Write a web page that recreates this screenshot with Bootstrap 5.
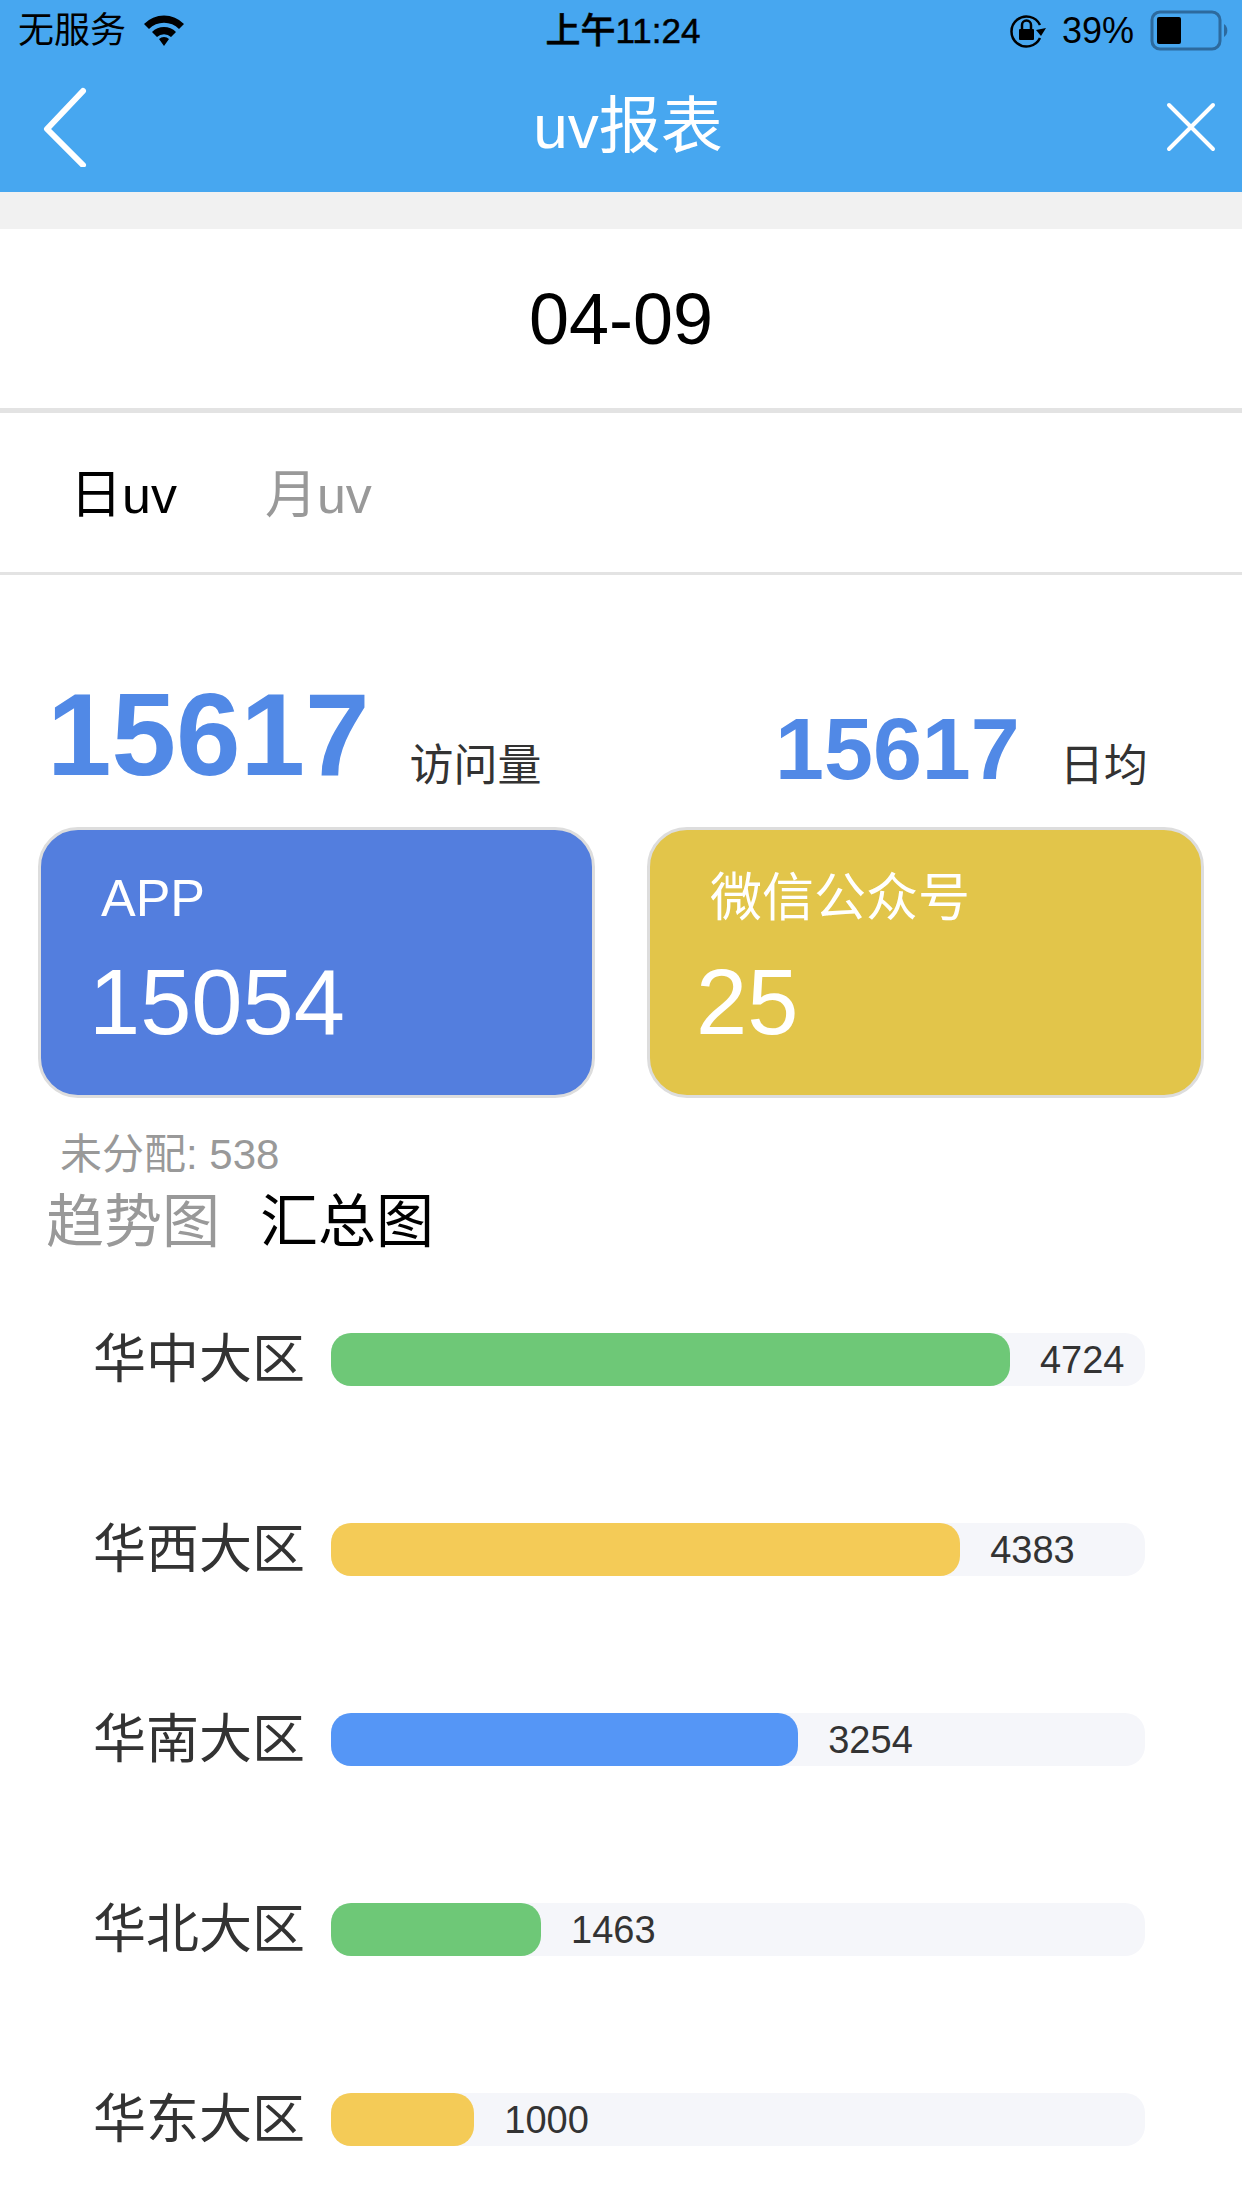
<!DOCTYPE html>
<html lang="zh">
<head>
  <meta charset="UTF-8">
  <meta name="viewport" content="width=device-width, initial-scale=1.0">
  <title>uv报表</title>
  <link href="https://cdn.jsdelivr.net/npm/bootstrap@5.3.3/dist/css/bootstrap.min.css" rel="stylesheet">
  <style>
    html, body { height: 2208px; overflow: hidden; }
    body { font-family: "Liberation Sans", "Noto Sans CJK SC", sans-serif; background: #fff; color: #000; }
    .app-top { background: #47a7f0; height: 192px; }
    .status-bar { height: 62px; padding: 0 14px 0 18px; font-size: 36px; line-height: 62px; }
    .status-left, .status-right { width: 400px; }
    .status-time { font-weight: 500; font-size: 35px; -webkit-text-stroke: .5px #000; }
    .title-bar { height: 130px; padding: 0 26px 0 42px; }
    .title-text { color: #fff; font-size: 62px; line-height: 1; }
    .gap-strip { height: 37px; background: #f1f1f1; }
    .date-row { height: 179px; font-size: 72px; border-bottom: 5px solid #e3e3e3; box-sizing: content-box; }
    .tab-row { height: 162px; padding-left: 70px; gap: 88px; font-size: 52px; border-bottom: 3px solid #e3e3e3; padding-top: 4px; }
    .tab-off { color: #999; }
    .total-row { height: 252px; padding: 0 0 34px 47px; }
    .total-left { width: 728px; }
    .num-big { color: #5189e6; font-weight: 700; font-size: 116px; line-height: 1; margin-right: 40px; }
    .num-mid { color: #5189e6; font-weight: 700; font-size: 88px; line-height: 1; margin-right: 40px; }
    .num-label { color: #333; font-size: 44px; line-height: 1.2; }
    .cards-row { padding: 0 38px; gap: 52px; }
    .stat-box { width: 558px; height: 271px; border: 3px solid #ddd; border-radius: 40px; color: #fff; padding: 38px 0 0 48px; }
    .box-blue { background: #537ede; }
    .box-yellow { background: #e2c54a; }
    .box-name { font-size: 52px; line-height: 60px; margin-left: 12px; }
    .box-num { font-size: 92px; line-height: 100px; margin-top: 24px; }
    .box-yellow .box-name { margin-left: 12px; }
    .box-yellow .box-num { margin-left: -2px; }
    .unassigned { color: #999; font-size: 42px; line-height: 50px; padding: 32px 0 0 60px; }
    .chart-tabs { padding-left: 46px; gap: 40px; font-size: 58px; line-height: 76px; margin-top: 4px; }
    .chart-rows { padding: 66px 97px 0 93px; }
    .chart-row { height: 190px; padding-top: 7px; }
    .region { width: 238px; font-size: 53px; line-height: 53px; color: #333; white-space: nowrap; }
    .track { height: 53px; border-radius: 20px; background: #f5f6fa; flex: 1; }
    .fill { height: 53px; border-radius: 20px; }
    .fill-green { background: #6ec877; }
    .fill-yellow { background: #f4cb57; }
    .fill-blue { background: #5596f6; }
    .fill-value { font-size: 38px; line-height: 48px; color: #333; margin-left: 30px; }
  </style>
</head>
<body>
  <div class="app-top">
    <div class="status-bar d-flex justify-content-between">
      <div class="status-left d-flex align-items-center gap-3">
        <span>无服务</span>
        <svg width="44" height="34" viewBox="0 0 44 34"><path d="M2 10 A28 28 0 0 1 42 10 L37 15 A21 21 0 0 0 7 15 Z M10 18 A17 17 0 0 1 34 18 L29 23 A10 10 0 0 0 15 23 Z M17 25 A7 7 0 0 1 27 25 L22 32 Z" fill="#000"/></svg>
      </div>
      <div class="status-time">上午11:24</div>
      <div class="status-right d-flex align-items-center justify-content-end gap-3">
        <svg width="36" height="36" viewBox="0 0 36 36" fill="none"><path d="M30 12 A15 15 0 1 0 30 25" stroke="#000" stroke-width="2.5"/><path d="M26 17 L36 15 L31 23 Z" fill="#000"/><rect x="9" y="16" width="15" height="11" rx="1" fill="#000"/><path d="M12 16 V12 a4.500 4.500 0 0 1 9 0 V16" stroke="#000" stroke-width="2.500"/></svg>
        <span>39%</span>
        <svg width="78" height="42" viewBox="0 0 78 42" class="ms-n1"><rect x="2" y="2" width="68" height="37" rx="8" fill="none" stroke="#2d6a9e" stroke-width="3"/><rect x="7" y="7" width="24" height="27" rx="2" fill="#000"/><path d="M74 14 a8 8 0 0 1 0 13 Z" fill="#2d6a9e"/></svg>
      </div>
    </div>
    <div class="title-bar d-flex align-items-center justify-content-between">
      <svg width="48" height="80" viewBox="0 0 48 80" fill="none"><path d="M41 4 L5 42 L41 78" stroke="#fff" stroke-width="6" stroke-linecap="round" stroke-linejoin="round"/></svg>
      <div class="title-text">uv报表</div>
      <svg width="50" height="50" viewBox="0 0 50 50" fill="none"><path d="M3 3 L47 47 M47 3 L3 47" stroke="#fff" stroke-width="4" stroke-linecap="round"/></svg>
    </div>
  </div>
  <div class="gap-strip"></div>
  <div class="date-row d-flex align-items-center justify-content-center">04-09</div>
  <div class="tab-row d-flex align-items-center">
    <span>日uv</span>
    <span class="tab-off">月uv</span>
  </div>
  <div class="total-row d-flex align-items-end">
    <div class="total-left d-flex align-items-end">
      <span class="num-big">15617</span>
      <span class="num-label">访问量</span>
    </div>
    <div class="d-flex align-items-end">
      <span class="num-mid">15617</span>
      <span class="num-label">日均</span>
    </div>
  </div>
  <div class="cards-row d-flex">
    <div class="stat-box box-blue">
      <div class="box-name">APP</div>
      <div class="box-num">15054</div>
    </div>
    <div class="stat-box box-yellow">
      <div class="box-name">微信公众号</div>
      <div class="box-num">25</div>
    </div>
  </div>
  <div class="unassigned">未分配: 538</div>
  <div class="chart-tabs d-flex">
    <span class="tab-off">趋势图</span>
    <span>汇总图</span>
  </div>
  <div class="chart-rows" id="chartRows"></div>

  <script>
    const regions = [
      { name: "华中大区", value: 4724, pct: 83.4, color: "fill-green" },
      { name: "华西大区", value: 4383, pct: 77.3, color: "fill-yellow" },
      { name: "华南大区", value: 3254, pct: 57.4, color: "fill-blue" },
      { name: "华北大区", value: 1463, pct: 25.8, color: "fill-green" },
      { name: "华东大区", value: 1000, pct: 17.6, color: "fill-yellow" }
    ];
    document.getElementById("chartRows").innerHTML = regions.map(r => `
      <div class="chart-row d-flex">
        <div class="region">${r.name}</div>
        <div class="track d-flex align-items-center">
          <div class="fill ${r.color}" style="width: ${r.pct}%"></div>
          <span class="fill-value">${r.value}</span>
        </div>
      </div>
    `).join("");
  </script>
  <script src="https://cdn.jsdelivr.net/npm/bootstrap@5.3.3/dist/js/bootstrap.bundle.min.js"></script>
</body>
</html>
